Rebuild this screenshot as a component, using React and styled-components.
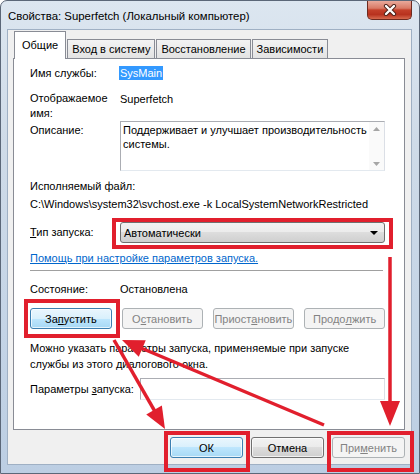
import React from "react";
import styled, { createGlobalStyle } from "styled-components";

const GlobalStyle = createGlobalStyle`
  html, body {
    margin: 0;
    padding: 0;
    background: #ffffff;
  }
  body {
    font-family: "Liberation Sans", Arial, sans-serif;
    font-size: 11px;
    color: #000;
  }
`;

const RED = "#e11f2d";

const Window = styled.div`
  position: relative;
  width: 420px;
  height: 474px;
  box-sizing: border-box;
  display: flex;
  flex-direction: column;
  padding: 0 7px 8px 6px;
  border: 1px solid #5b6778;
  border-radius: 7px 7px 0 0;
  background: linear-gradient(
    180deg,
    #dce6f0 0%,
    #cfdbe8 30%,
    #c4d4e6 70%,
    #bccee3 100%
  );
`;

const TitleBar = styled.div`
  height: 28px;
  display: flex;
  align-items: flex-start;
  padding-left: 1px;
`;

const Title = styled.div`
  line-height: 16px;
  padding-top: 7px;
  font-size: 11.4px;
  color: #000;
`;

const CloseButton = styled.div`
  margin-left: auto;
  width: 45px;
  height: 19px;
  box-sizing: border-box;
  border: 1px solid #6d2a1f;
  border-top: none;
  border-radius: 0 0 5px 5px;
  background: linear-gradient(
    180deg,
    #e9a99b 0%,
    #d97a66 40%,
    #c4402a 50%,
    #b8321e 75%,
    #d76a4e 100%
  );
  display: flex;
  align-items: center;
  justify-content: center;
`;

const Client = styled.div`
  flex: 1;
  display: flex;
  flex-direction: column;
  background: #f0f0f0;
  border: 1px solid #9fb0c4;
  padding: 0 6px 0 5px;
`;

const TabStrip = styled.div`
  height: 28px;
  display: flex;
  align-items: flex-end;
  padding-left: 1px;
  gap: 1px;
`;

const Tab = styled.div`
  position: relative;
  box-sizing: border-box;
  height: ${(p) => (p.$active ? "28px" : "19px")};
  margin-bottom: ${(p) => (p.$active ? "-1px" : "0")};
  padding: ${(p) => (p.$active ? "6px 7px 0" : "2px 4px 0")};
  border: 1px solid #898c95;
  border-bottom: none;
  line-height: 15px;
  background: ${(p) =>
    p.$active ? "#ffffff" : "linear-gradient(180deg, #f3f3f3, #e3e3e3)"};
  z-index: ${(p) => (p.$active ? 1 : 0)};
  white-space: nowrap;
`;

const Panel = styled.div`
  height: 372px;
  box-sizing: border-box;
  border: 1px solid #898c95;
  background: #ffffff;
  padding: 6px 19px 0 16px;
`;

const Row = styled.div`
  display: grid;
  grid-template-columns: ${(p) => p.$label || 90}px 1fr;
  margin-top: ${(p) => p.$mt || 0}px;
  align-items: start;
`;

const Label = styled.div`
  line-height: ${(p) => p.$lh || 16}px;
  padding-top: ${(p) => p.$pt || 0}px;
  white-space: nowrap;
`;

const Text = styled.div`
  line-height: ${(p) => p.$lh || 16}px;
  margin-top: ${(p) => p.$mt || 0}px;
  white-space: nowrap;
`;

const Selected = styled.span`
  display: inline-block;
  margin-top: 1px;
  margin-left: -1px;
  padding: 0 1px;
  line-height: 14px;
  background: #3399ff;
  color: #ffffff;
`;

const TextArea = styled.div`
  height: 50px;
  box-sizing: border-box;
  display: flex;
  border: 1px solid #abadb3;
  border-right-color: #dbdfe6;
  border-bottom-color: #e3e9ef;
`;

const TextAreaBody = styled.div`
  flex: 1;
  padding: 0 2px;
`;

const ScrollBar = styled.div`
  width: 15px;
  display: flex;
  flex-direction: column;
  justify-content: space-between;
  align-items: center;
  padding: 5px 0 4px;
  background: #fafafa;
`;

const Combo = styled.div`
  height: 21px;
  box-sizing: border-box;
  display: flex;
  align-items: center;
  padding: 0 6px 0 3px;
  border: 1px solid #707070;
  border-radius: 3px;
  background: linear-gradient(
    180deg,
    #f2f2f2 0%,
    #ebebeb 50%,
    #dddddd 50%,
    #cfcfcf 100%
  );
`;

const ComboText = styled.span`
  flex: 1;
`;

const Link = styled.div`
  margin-top: 7px;
  line-height: 16px;
  color: #0066cc;
  text-decoration: underline;
`;

const Separator = styled.div`
  margin-top: 4px;
  height: 0;
  border-top: 1px solid #a0a0a0;
  margin-right: 2px;
`;

const ButtonRow = styled.div`
  display: flex;
  gap: 10px;
  margin-top: ${(p) => p.$mt || 0}px;
`;

const Button = styled.div`
  width: ${(p) => p.$w}px;
  height: 21px;
  box-sizing: border-box;
  display: flex;
  align-items: center;
  justify-content: center;
  border-radius: 3px;
  border: 1px solid
    ${(p) => (p.$kind === "blue" ? "#3c7fb1" : p.$kind === "off" ? "#adb2b5" : "#707070")};
  color: ${(p) => (p.$kind === "off" ? "#838383" : "#000")};
  background: ${(p) =>
    p.$kind === "blue"
      ? "linear-gradient(180deg, #eaf6fd 0%, #d9f0fc 50%, #bee6fd 50%, #a7d9f5 100%)"
      : p.$kind === "off"
      ? "#f4f4f4"
      : "linear-gradient(180deg, #f2f2f2 0%, #ebebeb 50%, #dddddd 50%, #cfcfcf 100%)"};
  box-shadow: ${(p) =>
    p.$kind === "off" ? "none" : "inset 0 0 0 1px rgba(255,255,255,0.7)"};
`;

const Input = styled.div`
  height: 22px;
  box-sizing: border-box;
  border: 1px solid #abadb3;
  border-right-color: #dbdfe6;
  border-bottom-color: #e3e9ef;
  background: #fff;
`;

const Footer = styled.div`
  display: flex;
  justify-content: flex-end;
  gap: 8px;
  padding-top: 7px;
`;

const Overlay = styled.svg`
  position: absolute;
  left: 0;
  top: 0;
  pointer-events: none;
`;

function Arrow({ from, to, len = 22, half = 9 }) {
  const [x1, y1] = from;
  const [x2, y2] = to;
  const d = Math.hypot(x2 - x1, y2 - y1);
  const ux = (x2 - x1) / d;
  const uy = (y2 - y1) / d;
  const bx = x2 - ux * len;
  const by = y2 - uy * len;
  const pts = `${x2},${y2} ${bx - uy * half},${by + ux * half} ${bx + uy * half},${by - ux * half}`;
  return (
    <g>
      <line x1={x1} y1={y1} x2={bx + ux * 2} y2={by + uy * 2} stroke={RED} strokeWidth="3.5" />
      <polygon points={pts} fill={RED} />
    </g>
  );
}

function Annotations() {
  return (
    <Overlay width="420" height="474" viewBox="0 0 420 474">
      <g fill="none" stroke={RED} strokeWidth="4">
        <rect x="113" y="219" width="277" height="27" />
        <rect x="25" y="300" width="92" height="35" />
        <rect x="165" y="432" width="82" height="37" />
        <rect x="328" y="432" width="83" height="37" />
      </g>
      <Arrow from={[113, 339]} to={[164, 428]} />
      <Arrow from={[323, 424]} to={[121, 339]} />
      <Arrow from={[389, 256]} to={[389, 425]} len={25} half={10} />
    </Overlay>
  );
}

const tabs = ["Общие", "Вход в систему", "Восстановление", "Зависимости"];

export default function App() {
  return (
    <>
      <GlobalStyle />
      <Window>
        <TitleBar>
          <Title>Свойства: Superfetch (Локальный компьютер)</Title>
          <CloseButton>
            <svg width="14" height="12" viewBox="0 0 14 12">
              <path d="M3 2 L11 10 M11 2 L3 10" stroke="#4a2018" strokeWidth="4.2" strokeLinecap="round" />
              <path d="M3 2 L11 10 M11 2 L3 10" stroke="#ffffff" strokeWidth="2.4" strokeLinecap="round" />
            </svg>
          </CloseButton>
        </TitleBar>
        <Client>
          <TabStrip>
            {tabs.map((t, i) => (
              <Tab key={t} $active={i === 0}>
                {t}
              </Tab>
            ))}
          </TabStrip>
          <Panel>
            <Row>
              <Label>Имя службы:</Label>
              <Text>
                <Selected>SysMain</Selected>
              </Text>
            </Row>
            <Row $mt={10}>
              <Label $lh={15}>
                Отображаемое
                <br />
                имя:
              </Label>
              <Text $lh={15} $mt={1}>Superfetch</Text>
            </Row>
            <Row>
              <Label $pt={1}>Описание:</Label>
              <TextArea>
                <TextAreaBody>
                  <Text $lh={14} $mt={1}>Поддерживает и улучшает производительность</Text>
                  <Text $lh={14}>системы.</Text>
                </TextAreaBody>
                <ScrollBar>
                  <svg width="7" height="4" viewBox="0 0 7 4">
                    <path d="M0 4 L3.5 0 L7 4 Z" fill="#a6a6a6" />
                  </svg>
                  <svg width="7" height="4" viewBox="0 0 7 4">
                    <path d="M0 0 L3.5 4 L7 0 Z" fill="#a6a6a6" />
                  </svg>
                </ScrollBar>
              </TextArea>
            </Row>
            <Text $mt={7}>Исполняемый файл:</Text>
            <Text $mt={2}>C:\Windows\system32\svchost.exe -k LocalSystemNetworkRestricted</Text>
            <Row $mt={10}>
              <Label $lh={21}>
                <u>Т</u>ип запуска:
              </Label>
              <Combo>
                <ComboText>Автоматически</ComboText>
                <svg width="8" height="4" viewBox="0 0 8 4">
                  <path d="M0 0 L8 0 L4 4 Z" fill="#000" />
                </svg>
              </Combo>
            </Row>
            <Link>Помощь при настройке параметров запуска.</Link>
            <Separator />
            <Row $mt={10}>
              <Label>Состояние:</Label>
              <Text>Остановлена</Text>
            </Row>
            <ButtonRow $mt={11}>
              <Button $w={82} $kind="blue">
                За<u>п</u>устить
              </Button>
              <Button $w={81} $kind="off">
                О<u>с</u>тановить
              </Button>
              <Button $w={82} $kind="off">
                Приост<u>а</u>новить
              </Button>
              <Button $w={81} $kind="off">
                Продо<u>л</u>жить
              </Button>
            </ButtonRow>
            <Text $mt={11}>Можно указать параметры запуска, применяемые при запуске</Text>
            <Text>службы из этого диалогового окна.</Text>
            <Row $mt={6} $label={110}>
              <Label $lh={22}>
                Параметры <u>з</u>апуска:
              </Label>
              <Input />
            </Row>
          </Panel>
          <Footer>
            <Button $w={73} $kind="blue">
              ОК
            </Button>
            <Button $w={73}>Отмена</Button>
            <Button $w={73} $kind="off">
              При<u>м</u>енить
            </Button>
          </Footer>
        </Client>
        <Annotations />
      </Window>
    </>
  );
}
